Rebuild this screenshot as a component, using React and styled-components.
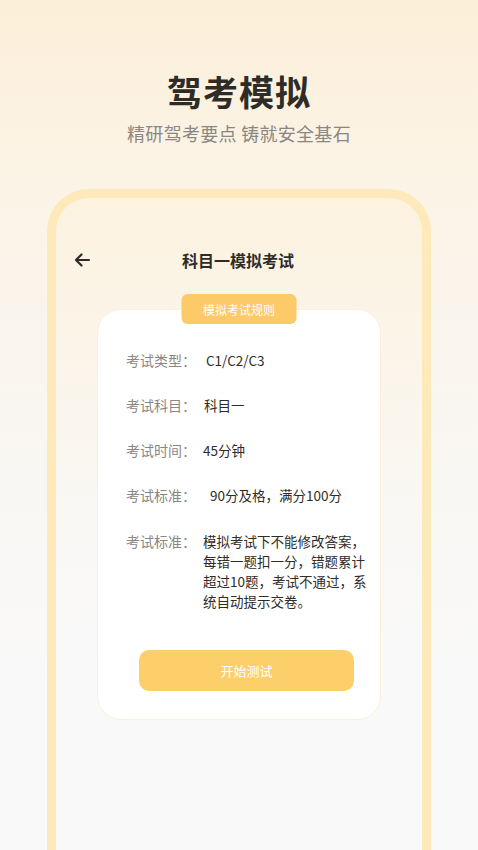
import React from "react";
import styled, { createGlobalStyle } from "styled-components";

const Global = createGlobalStyle`
  html, body { margin: 0; padding: 0; }
  body {
    font-family: "Noto Sans CJK SC", "Noto Sans", sans-serif;
    background: #f9f9f9;
  }
`;

const Page = styled.div`
  width: 478px;
  height: 850px;
  overflow: hidden;
  background: linear-gradient(180deg, #fcefd9 0%, #fbf4e8 25%, #f9f7f3 55%, #f9f9f9 80%, #f9f9f9 100%);
  display: flex;
  flex-direction: column;
  align-items: center;
`;

const Hero = styled.div`
  display: flex;
  flex-direction: column;
  align-items: center;
  padding-top: 66px;
`;

const HeroTitle = styled.h1`
  margin: 0;
  font-size: 35px;
  line-height: 50px;
  font-weight: 700;
  color: #2f2c28;
  letter-spacing: 1px;
`;

const HeroSub = styled.p`
  margin: 4px 0 0;
  font-size: 18px;
  line-height: 26px;
  color: #8a8683;
  letter-spacing: 0.3px;
`;

const Phone = styled.div`
  margin-top: 43px;
  width: 384px;
  flex: 1;
  box-sizing: border-box;
  border: 9px solid #fee9bb;
  border-bottom: none;
  border-radius: 42px 42px 0 0;
  background: linear-gradient(180deg, #fcf2df 0%, #fbf5ea 25%, #f9f8f5 50%, #f9f9f9 70%);
  display: flex;
  flex-direction: column;
  align-items: center;
`;

const Header = styled.div`
  position: relative;
  width: 100%;
  margin-top: 50px;
  height: 24px;
  display: flex;
  align-items: center;
  justify-content: center;
`;

const Back = styled.div`
  position: absolute;
  left: 17px;
  top: 3px;
  width: 18px;
  height: 18px;
  display: flex;
`;

const HeaderTitle = styled.div`
  font-size: 16px;
  font-weight: 700;
  color: #2f2c28;
  margin-left: -2px;
`;

const CardWrap = styled.div`
  position: relative;
  margin-top: 37px;
  display: flex;
  flex-direction: column;
  align-items: center;
`;

const Tag = styled.div`
  position: absolute;
  top: -15px;
  left: 50%;
  transform: translateX(-50%);
  width: 115px;
  height: 30px;
  border-radius: 6px;
  background: #fcca68;
  color: #fff;
  font-size: 12px;
  display: flex;
  align-items: center;
  justify-content: center;
  z-index: 1;
`;

const Card = styled.div`
  width: 284px;
  box-sizing: border-box;
  background: #fff;
  border: 1px solid #fcf1d8;
  border-radius: 24px;
  padding: 40px 0 28px 28px;
  display: flex;
  flex-direction: column;
`;

const Row = styled.div`
  display: flex;
  align-items: flex-start;
  margin-bottom: ${(p) => p.$gap || 25}px;
`;

const Label = styled.div`
  flex: none;
  font-size: 14px;
  line-height: 20px;
  color: #8a8683;
  width: ${(p) => p.$w || 78}px;
`;

const Value = styled.div`
  font-size: 13.5px;
  line-height: 20px;
  color: #2f2c28;
  width: ${(p) => p.$w || "auto"};
`;

const Button = styled.div`
  margin: 14px 0 0 13px;
  width: 215px;
  height: 41px;
  border-radius: 10px;
  background: #fdcf6b;
  color: #fff;
  font-size: 13px;
  display: flex;
  align-items: center;
  justify-content: center;
`;

export default function App() {
  return (
    <>
      <Global />
      <Page>
        <Hero>
          <HeroTitle>驾考模拟</HeroTitle>
          <HeroSub>精研驾考要点 铸就安全基石</HeroSub>
        </Hero>
        <Phone>
          <Header>
            <Back>
              <svg width="18" height="18" viewBox="0 0 18 18" fill="none">
                <path d="M16 9H3M8.5 3.5L3 9l5.5 5.5" stroke="#2f2c28" strokeWidth="2.2" strokeLinecap="round" strokeLinejoin="round" />
              </svg>
            </Back>
            <HeaderTitle>科目一模拟考试</HeaderTitle>
          </Header>
          <CardWrap>
            <Tag>模拟考试规则</Tag>
            <Card>
              <Row>
                <Label $w={80}>考试类型：</Label>
                <Value>C1/C2/C3</Value>
              </Row>
              <Row>
                <Label $w={78}>考试科目：</Label>
                <Value>科目一</Value>
              </Row>
              <Row>
                <Label $w={77}>考试时间：</Label>
                <Value>45分钟</Value>
              </Row>
              <Row $gap={26}>
                <Label $w={84}>考试标准：</Label>
                <Value>90分及格，满分100分</Value>
              </Row>
              <Row $gap={0}>
                <Label $w={77}>考试标准：</Label>
                <Value $w="168px">模拟考试下不能修改答案，每错一题扣一分，错题累计超过10题，考试不通过，系统自动提示交卷。</Value>
              </Row>
              <Button>开始测试</Button>
            </Card>
          </CardWrap>
        </Phone>
      </Page>
    </>
  );
}
